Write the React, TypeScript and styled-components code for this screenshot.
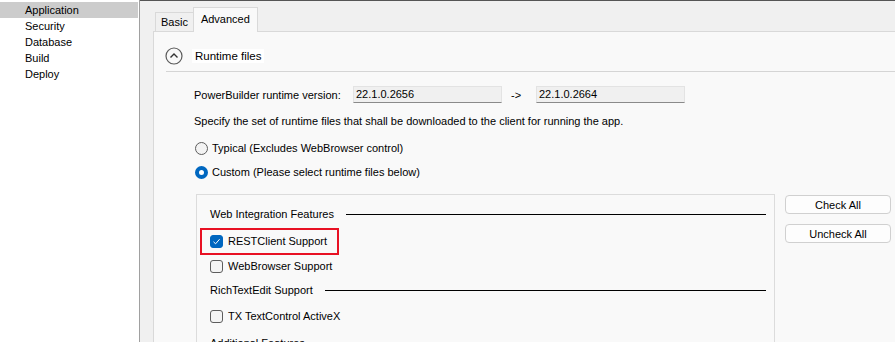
import React from 'react'
import styled, { createGlobalStyle } from 'styled-components'

const GlobalStyle = createGlobalStyle`
  body {
    margin: 0;
    font-family: "Segoe UI", "Liberation Sans", Arial, sans-serif;
    font-size: 11px;
    color: #000;
    background: #fff;
  }
`

const Root = styled.div`
  display: flex;
  width: 895px;
  height: 342px;
  overflow: hidden;
`

const Sidebar = styled.nav`
  width: 139px;
  flex-shrink: 0;
  background: #fff;
  border-right: 1px solid #a0a0a0;
  padding-top: 2px;
`

const NavItem = styled.div<{ $active?: boolean }>`
  height: 16px;
  line-height: 16px;
  padding-left: 25px;
  margin-right: 1px;
  background: ${(p) => (p.$active ? '#cccccc' : 'transparent')};
`

const Pane = styled.div`
  flex: 1;
  display: flex;
  flex-direction: column;
  background: #f0f0f0;
  border-top: 1px solid #555;
  padding-left: 13px;
  min-width: 0;
`

const TabStrip = styled.div`
  display: flex;
  flex-shrink: 0;
  align-items: flex-end;
  height: 30px;
  padding-left: 2px;
`

const Tab = styled.div<{ $active?: boolean }>`
  position: relative;
  box-sizing: border-box;
  height: ${(p) => (p.$active ? '25px' : '19px')};
  margin-bottom: ${(p) => (p.$active ? '-1px' : '0')};
  padding: ${(p) => (p.$active ? '4px 7px 0' : '2px 5px 0')};
  background: ${(p) => (p.$active ? '#f9f9f9' : '#f0f0f0')};
  border: 1px solid #d9d9d9;
  border-bottom: none;
  ${(p) => (p.$active ? '' : 'border-right: none;')}
  z-index: ${(p) => (p.$active ? 1 : 0)};
  line-height: 14px;
`

const Panel = styled.div`
  flex: 1;
  flex-shrink: 0;
  background: #f9f9f9;
  border-top: 1px solid #d9d9d9;
  border-left: 1px solid #d9d9d9;
`

const SectionHeader = styled.div`
  display: flex;
  align-items: center;
  height: 18px;
  margin-top: 15px;
  padding-left: 11px;
  gap: 9px;
`

const SectionTitle = styled.span`
  background: #fff;
  padding: 1px 3px;
  font-size: 11.5px;
`

const Divider = styled.div`
  height: 1px;
  margin: 6px 0 0 12px;
  background: #d5d5d5;
`

const Body = styled.div`
  padding-left: 40px;
`

const VersionRow = styled.div`
  display: flex;
  align-items: center;
  margin-top: 14px;
  height: 17px;
`

const Label = styled.span`
  width: 159px;
`

const VersionBox = styled.div`
  box-sizing: border-box;
  width: 149px;
  height: 17px;
  padding-left: 2px;
  line-height: 15px;
  background: #f0f0f0;
  border: 1px solid #e3e3e3;
  border-bottom-color: #8a8a8a;
`

const Arrow = styled.span`
  width: 34px;
  padding-left: 9px;
  box-sizing: border-box;
`

const Hint = styled.div`
  margin-top: 10px;
  line-height: 16px;
`

const OptionRow = styled.div<{ $gap?: number }>`
  display: flex;
  align-items: center;
  height: 16px;
  margin-top: ${(p) => p.$gap ?? 8}px;
`

const RadioDot = styled.span<{ $checked?: boolean }>`
  box-sizing: border-box;
  width: 13px;
  height: 13px;
  margin: 0 4px 0 1px;
  border-radius: 50%;
  border: ${(p) => (p.$checked ? '4px solid #0067c0' : '1px solid #5d5d5d')};
  background: ${(p) => (p.$checked ? '#fff' : '#f3f3f3')};
`

const GroupArea = styled.div`
  display: flex;
  align-items: flex-start;
  margin: 14px 0 0 2px;
`

const GroupBox = styled.div`
  width: 579px;
  height: 200px;
  box-sizing: border-box;
  border: 1px solid #dcdcdc;
  padding: 0 8px 0 13px;
`

const FeatureRow = styled.div<{ $gap: number }>`
  display: flex;
  align-items: center;
  height: 16px;
  margin-top: ${(p) => p.$gap}px;
`

const FeatureTitle = styled(FeatureRow)`
  gap: 12px;
  &::after {
    content: '';
    flex: 1;
    height: 1px;
    background: #000;
  }
`

const CheckItem = styled.div<{ $highlight?: boolean }>`
  position: relative;
  display: inline-flex;
  align-items: center;
  gap: 5px;
  ${(p) =>
    p.$highlight
      ? `&::after {
    content: '';
    position: absolute;
    left: -10px;
    right: -12px;
    top: -7px;
    bottom: -7px;
    border: 2px solid #e81123;
  }`
      : ''}
`

const Box = styled.span<{ $checked?: boolean }>`
  box-sizing: border-box;
  display: flex;
  align-items: center;
  justify-content: center;
  width: 13px;
  height: 13px;
  border-radius: 3px;
  border: 1px solid ${(p) => (p.$checked ? '#0067c0' : '#5d5d5d')};
  background: ${(p) => (p.$checked ? '#0067c0' : '#f4f4f4')};
`

const ButtonColumn = styled.div`
  display: flex;
  flex-direction: column;
  gap: 10px;
  margin: 1px 0 0 10px;
`

const Button = styled.button`
  box-sizing: border-box;
  width: 106px;
  height: 19px;
  padding: 0;
  font: inherit;
  color: #000;
  background: #fdfdfd;
  border: 1px solid #d0d0d0;
  border-radius: 4px;
`

const CollapseIcon = () => (
  <svg width="18" height="18" viewBox="0 0 18 18">
    <circle cx="9" cy="9" r="8" fill="none" stroke="#5a5a5a" strokeWidth="1.2" />
    <path d="M5.5 10.5 L9 7 L12.5 10.5" fill="none" stroke="#333" strokeWidth="1.4" />
  </svg>
)

const Check = () => (
  <svg width="9" height="9" viewBox="0 0 9 9">
    <path d="M1.5 4.8 L3.6 6.8 L7.6 2.2" fill="none" stroke="#fff" strokeWidth="1" />
  </svg>
)

const Feature = ({
  label,
  gap,
  checked,
  highlight,
}: {
  label: string
  gap: number
  checked?: boolean
  highlight?: boolean
}) => (
  <FeatureRow $gap={gap}>
    <CheckItem $highlight={highlight}>
      <Box $checked={checked}>{checked && <Check />}</Box>
      <span>{label}</span>
    </CheckItem>
  </FeatureRow>
)

const navItems = ['Application', 'Security', 'Database', 'Build', 'Deploy']

export default function App() {
  return (
    <Root>
      <GlobalStyle />
      <Sidebar>
        {navItems.map((item) => (
          <NavItem key={item} $active={item === 'Application'}>
            {item}
          </NavItem>
        ))}
      </Sidebar>
      <Pane>
        <TabStrip>
          <Tab>Basic</Tab>
          <Tab $active>Advanced</Tab>
        </TabStrip>
        <Panel>
          <SectionHeader>
            <CollapseIcon />
            <SectionTitle>Runtime files</SectionTitle>
          </SectionHeader>
          <Divider />
          <Body>
            <VersionRow>
              <Label>PowerBuilder runtime version:</Label>
              <VersionBox>22.1.0.2656</VersionBox>
              <Arrow>-&gt;</Arrow>
              <VersionBox>22.1.0.2664</VersionBox>
            </VersionRow>
            <Hint>Specify the set of runtime files that shall be downloaded to the client for running the app.</Hint>
            <OptionRow $gap={11}>
              <RadioDot />
              <span>Typical (Excludes WebBrowser control)</span>
            </OptionRow>
            <OptionRow>
              <RadioDot $checked />
              <span>Custom (Please select runtime files below)</span>
            </OptionRow>
            <GroupArea>
              <GroupBox>
                <FeatureTitle $gap={11}>Web Integration Features</FeatureTitle>
                <Feature label="RESTClient Support" gap={11} checked highlight />
                <Feature label="WebBrowser Support" gap={9} />
                <FeatureTitle $gap={8}>RichTextEdit Support</FeatureTitle>
                <Feature label="TX TextControl ActiveX" gap={10} />
                <FeatureTitle $gap={11}>Additional Features</FeatureTitle>
              </GroupBox>
              <ButtonColumn>
                <Button>Check All</Button>
                <Button>Uncheck All</Button>
              </ButtonColumn>
            </GroupArea>
          </Body>
        </Panel>
      </Pane>
    </Root>
  )
}
